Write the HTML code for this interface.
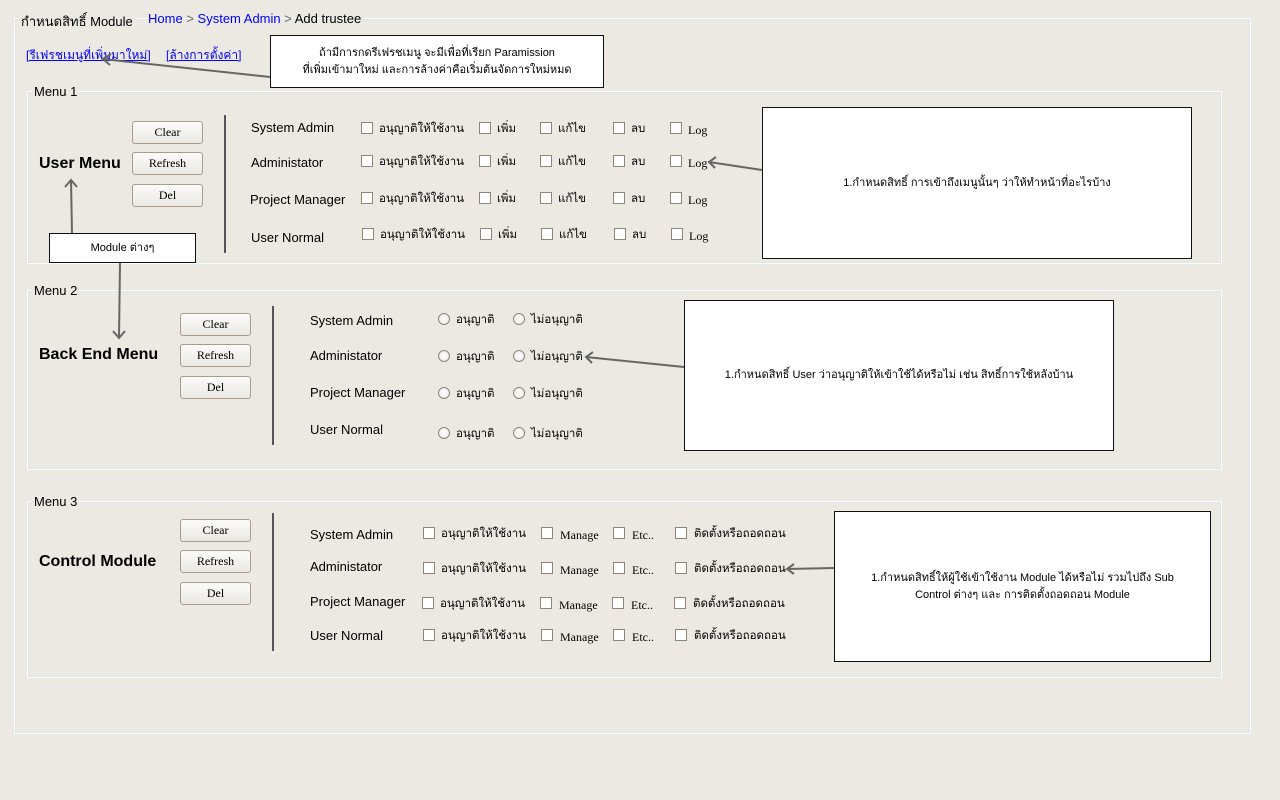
<!DOCTYPE html>
<html><head><meta charset="utf-8"><style>
*{margin:0;padding:0;box-sizing:border-box}
body{width:1280px;height:800px;background:#ece9e2;position:relative;overflow:hidden;font-family:"Liberation Sans","DejaVu Sans",sans-serif;font-size:13px;color:#000}
.a{position:absolute;white-space:nowrap}
.fs{position:absolute;border:1px solid #fbfcfd;box-shadow:inset 0 0 0 1px #dfe4e8}
.lg{position:absolute;background:#ece9e2;padding:0 2px;font-size:13px}
.btn{position:absolute;width:71px;height:23px;border:1px solid #a89c8c;border-radius:3px;background:linear-gradient(#fbfbfa,#ebe8e2);font-family:"Liberation Serif",serif;font-size:12px;text-align:center;line-height:21px}
.cb{position:absolute;width:12px;height:12px;border:1px solid #8f8677;background:#fff}
.rb{position:absolute;width:12px;height:12px;border:1px solid #8f8677;border-radius:50%;background:radial-gradient(#fff,#e8e6e0)}
.t{position:absolute;white-space:nowrap;font-size:11.5px}
.s{font-family:"Liberation Serif",serif;font-size:12px;margin-top:3px}
.lab{position:absolute;white-space:nowrap;font-size:13px}
.b{font-weight:bold}
.vl{position:absolute;width:2px;background:#555}
.box{position:absolute;background:#fff;border:1px solid #111;font-size:11px;text-align:center;display:flex;align-items:center;justify-content:center;line-height:17px}
a{color:#00f;text-decoration:underline}
</style></head><body>
<div class="fs" style="left:14px;top:18px;width:1237px;height:716px"></div>
<div class="a" style="left:19px;top:11px;background:#ece9e2;padding:0 2px;font-size:13px">กำหนดสิทธิ์ Module</div>
<div class="a" style="left:148px;top:11px;font-size:13px"><span style="color:#00f">Home</span> <span style="color:#666">&gt;</span> <span style="color:#00f">System Admin</span> <span style="color:#666">&gt;</span> Add trustee</div>
<div class="a" style="left:26px;top:46px;font-size:12px"><a>[รีเฟรชเมนูที่เพิ่มมาใหม่]</a></div>
<div class="a" style="left:166px;top:46px;font-size:12px"><a>[ล้างการตั้งค่า]</a></div>

<div class="fs" style="left:27px;top:91px;width:1195px;height:173px"></div>
<div class="lg" style="left:32px;top:84px">Menu 1</div>
<div class="fs" style="left:27px;top:290px;width:1195px;height:180px"></div>
<div class="lg" style="left:32px;top:283px">Menu 2</div>
<div class="fs" style="left:27px;top:501px;width:1195px;height:177px"></div>
<div class="lg" style="left:32px;top:494px">Menu 3</div>

<div class="a b" style="left:39px;top:155px;font-size:16px">User Menu</div>
<div class="btn" style="left:132px;top:121px">Clear</div>
<div class="btn" style="left:132px;top:152px">Refresh</div>
<div class="btn" style="left:132px;top:184px">Del</div>
<div class="vl" style="left:224px;top:115px;height:138px"></div>
<div class="lab" style="left:251px;top:120px">System Admin</div>
<div class="lab" style="left:251px;top:155px">Administator</div>
<div class="lab" style="left:250px;top:192px">Project Manager</div>
<div class="lab" style="left:251px;top:230px">User Normal</div>

<div class="a b" style="left:39px;top:346px;font-size:16px">Back End Menu</div>
<div class="btn" style="left:180px;top:313px">Clear</div>
<div class="btn" style="left:180px;top:344px">Refresh</div>
<div class="btn" style="left:180px;top:376px">Del</div>
<div class="vl" style="left:272px;top:306px;height:139px"></div>
<div class="lab" style="left:310px;top:313px">System Admin</div>
<div class="lab" style="left:310px;top:348px">Administator</div>
<div class="lab" style="left:310px;top:385px">Project Manager</div>
<div class="lab" style="left:310px;top:422px">User Normal</div>

<div class="a b" style="left:39px;top:553px;font-size:16px">Control Module</div>
<div class="btn" style="left:180px;top:519px">Clear</div>
<div class="btn" style="left:180px;top:550px">Refresh</div>
<div class="btn" style="left:180px;top:582px">Del</div>
<div class="vl" style="left:272px;top:513px;height:138px"></div>
<div class="lab" style="left:310px;top:527px">System Admin</div>
<div class="lab" style="left:310px;top:559px">Administator</div>
<div class="lab" style="left:310px;top:594px">Project Manager</div>
<div class="lab" style="left:310px;top:628px">User Normal</div>

<div id="dyn"></div>

<div class="box" style="left:270px;top:35px;width:334px;height:53px">ถ้ามีการกดรีเฟรชเมนู จะมีเพื่อที่เรียก Paramission<br>ที่เพิ่มเข้ามาใหม่ และการล้างค่าคือเริ่มต้นจัดการใหม่หมด</div>
<div class="box" style="left:762px;top:107px;width:430px;height:152px">1.กำหนดสิทธิ์ การเข้าถึงเมนูนั้นๆ ว่าให้ทำหน้าที่อะไรบ้าง</div>
<div class="box" style="left:684px;top:300px;width:430px;height:151px">1.กำหนดสิทธิ์ User ว่าอนุญาติให้เข้าใช้ได้หรือไม่ เช่น สิทธิ์การใช้หลังบ้าน</div>
<div class="box" style="left:834px;top:511px;width:377px;height:151px">1.กำหนดสิทธิ์ให้ผู้ใช้เข้าใช้งาน Module ได้หรือไม่ รวมไปถึง Sub<br>Control ต่างๆ และ การติดตั้งถอดถอน Module</div>
<div class="box" style="left:49px;top:233px;width:147px;height:30px">Module ต่างๆ</div>

<svg class="a" style="left:0;top:0" width="1280" height="800" fill="none" stroke="#666" stroke-width="2">
<path d="M270 77 L103 59 M111 54 L103 59 L110 65"/>
<path d="M762 170 L709 162 M716 157 L709 162 L715 168"/>
<path d="M684 367 L586 357 M593 352 L586 357 L592 363"/>
<path d="M834 568 L787 569 M794 564 L787 569 L794 574"/>
<path d="M72 233 L71 180 M65 187 L71 180 L77 187"/>
<path d="M120 263 L119 338 M113 331 L119 338 L125 331"/>
</svg>

<script>
var d=document.getElementById('dyn'),h='';
function cb(x,y){h+='<div class="cb" style="left:'+x+'px;top:'+(y-6)+'px"></div>'}
function rb(x,y){h+='<div class="rb" style="left:'+x+'px;top:'+(y-6)+'px"></div>'}
function tx(x,y,s,c){h+='<div class="t '+(c||'')+'" style="left:'+x+'px;top:'+(y-8)+'px">'+s+'</div>'}
[128,161,198,234].forEach(function(y,i){var o=i==3?1:0;
 cb(361+o,y);tx(379+o,y,'อนุญาติให้ใช้งาน');cb(479+o,y);tx(497+o,y,'เพิ่ม');cb(540+o,y);tx(558+o,y,'แก้ไข');cb(613+o,y);tx(631+o,y,'ลบ');cb(670+o,y);tx(688+o,y,'Log','s');});
[319,356,393,433].forEach(function(y){rb(438,y);tx(456,y,'อนุญาติ');rb(513,y);tx(531,y,'ไม่อนุญาติ');});
[533,568,603,635].forEach(function(y,i){var o=i==2?-1:0;
 cb(423+o,y);tx(441+o,y,'อนุญาติให้ใช้งาน');cb(541+o,y);tx(560+o,y,'Manage','s');cb(613+o,y);tx(632+o,y,'Etc..','s');cb(675+o,y);tx(694+o,y,'ติดตั้งหรือถอดถอน');});
d.innerHTML=h;
</script>
</body></html>
